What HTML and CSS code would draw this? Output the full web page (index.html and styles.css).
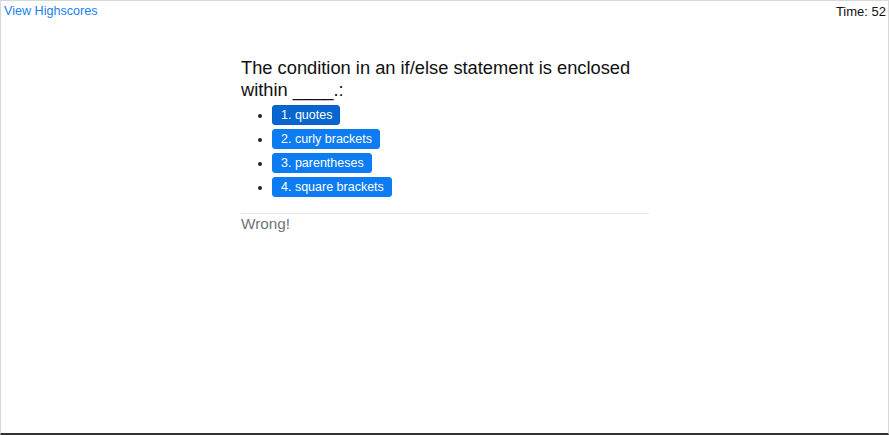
FILE: index.html
```html
<!DOCTYPE html>
<html>
<head>
<meta charset="utf-8">
<link rel="stylesheet" href="styles.css">
</head>
<body>
<div class="frame">
  <header class="topbar">
    <a class="highscores" href="#">View Highscores</a>
    <span class="timer">Time: 52</span>
  </header>
  <main class="quiz">
    <h2 class="question">The condition in an if/else statement is enclosed within ____.:</h2>
    <ul class="answers">
      <li><button class="answer active">1. quotes</button></li>
      <li><button class="answer">2. curly brackets</button></li>
      <li><button class="answer">3. parentheses</button></li>
      <li><button class="answer">4. square brackets</button></li>
    </ul>
    <hr class="divider">
    <p class="feedback">Wrong!</p>
  </main>
</div>
</body>
</html>
```
FILE: styles.css
```css
html, body {
  margin: 0;
  padding: 0;
  background: #fff;
}
body {
  font-family: "Liberation Sans", Arial, sans-serif;
  color: #212529;
}
.frame {
  box-sizing: border-box;
  width: 889px;
  height: 435px;
  border: 1px solid #d8d8d8;
  border-bottom: 2px solid #333;
  overflow: hidden;
}
.topbar {
  display: flex;
  justify-content: space-between;
  align-items: flex-start;
  padding: 2px 2px 0 3px;
  font-size: 13px;
  line-height: 17px;
}
.highscores {
  color: #1a7ff0;
  text-decoration: none;
  font-size: 12.6px;
}
.timer {
  color: #111;
}
.quiz {
  width: 408px;
  margin: 37px auto 0 240px;
}
.question {
  margin: 0;
  font-size: 18.3px;
  font-weight: 400;
  line-height: 22px;
  color: #111;
}
.answers {
  margin: 4px 0 0;
  padding: 0 0 0 31px;
  font-size: 12px;
}
.answers li {
  height: 20px;
  margin-bottom: 4px;
  line-height: 20px;
}
.answer {
  box-sizing: border-box;
  height: 20px;
  font-family: inherit;
  font-size: 12.5px;
  line-height: 18px;
  padding: 0 7px 0 8px;
  border: 1px solid #0d7cf2;
  border-radius: 3px;
  background: #0d7cf2;
  color: #fff;
  cursor: pointer;
  vertical-align: top;
}
.answer.active {
  background: #0a66cf;
  border-color: #0a5fc2;
}
.divider {
  margin: 16px 0 0;
  border: 0;
  border-top: 1px solid #e6e8ea;
}
.feedback {
  margin: 1px 0 0;
  font-size: 15.3px;
  line-height: 18px;
  color: #6c757d;
}
```
